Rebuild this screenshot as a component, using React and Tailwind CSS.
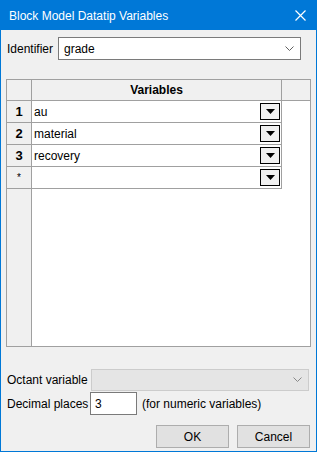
import React from "react";

const rows = [
  { id: "1", value: "au" },
  { id: "2", value: "material" },
  { id: "3", value: "recovery" },
  { id: "*", value: "" },
];

const Chevron = ({ color = "#606060" }) => (
  <svg width="9" height="6" viewBox="0 0 9 6" fill="none">
    <path d="M0.5 0.5 L4.5 4.5 L8.5 0.5" stroke={color} strokeWidth="1" />
  </svg>
);

const DropButton = () => (
  <div className="w-[20px] h-[17px] border border-black bg-[#f0f0f0] flex items-center justify-center">
    <svg width="9" height="5" viewBox="0 0 9 5">
      <path d="M0 0 H9 L4.5 5 Z" fill="#000" />
    </svg>
  </div>
);

const App = () => {
  return (
    <div
      className="w-[317px] h-[452px] bg-[#0078d7] p-px flex flex-col text-[12px] text-black whitespace-nowrap"
      style={{ fontFamily: '"Liberation Sans", Arial, sans-serif' }}
    >
      {/* title bar */}
      <div className="h-[29px] flex items-center justify-between pl-[8px] pr-[10px] text-white">
        <span className="leading-none">Block Model Datatip Variables</span>
        <svg width="11" height="11" viewBox="0 0 11 11">
          <path d="M0.5 0.5 L10.5 10.5 M10.5 0.5 L0.5 10.5" stroke="#fff" strokeWidth="1.2" />
        </svg>
      </div>

      <div className="flex-1 bg-[#f0f0f0] flex flex-col">
        {/* identifier */}
        <div className="flex items-center mt-[7px] ml-[6px] mr-[15px]">
          <span className="w-[51px] leading-none">Identifier</span>
          <div className="flex-1 h-[23px] bg-white border border-[#7a7a7a] flex items-center justify-between pl-[5px] pr-[6px]">
            <span className="leading-none">grade</span>
            <Chevron />
          </div>
        </div>

        {/* grid */}
        <div className="mt-[19px] ml-[5px] mr-[5px] h-[268px] border border-[#a0a0a0] bg-white flex">
          <div className="w-[25px] bg-[#f0f0f0] flex flex-col border-r border-[#a0a0a0]">
            <div className="h-[21px] border-b border-[#a0a0a0]" />
            {rows.map((r) => (
              <div
                key={r.id}
                className={`h-[22px] border-b border-[#a0a0a0] flex items-center justify-center ${
                  r.id === "*" ? "text-[10px]" : "font-bold text-[13px]"
                }`}
              >
                {r.id}
              </div>
            ))}
          </div>
          <div className="flex-1 flex flex-col">
            <div className="h-[21px] flex bg-[#f0f0f0] border-b border-[#a0a0a0]">
              <div className="w-[250px] border-r border-[#a0a0a0] flex items-center justify-center font-bold">
                Variables
              </div>
              <div className="flex-1 mr-px" />
            </div>
            <div className="w-[250px] flex flex-col">
              {rows.map((r) => (
                <div
                  key={r.id}
                  className="h-[22px] border-b border-r border-[#a0a0a0] flex items-center justify-between pl-[2px] pr-px"
                >
                  <span className="leading-none">{r.value}</span>
                  <DropButton />
                </div>
              ))}
            </div>
          </div>
        </div>

        {/* octant */}
        <div className="flex items-center mt-[22px] ml-[6px] mr-[7px]">
          <span className="w-[84px] leading-none">Octant variable</span>
          <div className="flex-1 h-[22px] bg-[#e5e5e5] border border-[#cccccc] flex items-center justify-end pr-[6px]">
            <Chevron color="#888888" />
          </div>
        </div>

        {/* decimal */}
        <div className="flex items-center mt-px ml-[6px]">
          <span className="w-[83px] leading-none">Decimal places</span>
          <div className="w-[47px] h-[23px] bg-white border border-[#7a7a7a] flex items-center pl-[4px]">
            <span className="leading-none">3</span>
          </div>
          <span className="ml-[5px] leading-none">(for numeric variables)</span>
        </div>

        {/* buttons */}
        <div className="flex justify-end gap-[8px] mt-[10px] mr-[6px]">
          <div className="w-[73px] h-[23px] bg-[#e1e1e1] border border-[#adadad] flex items-center justify-center">
            OK
          </div>
          <div className="w-[73px] h-[23px] bg-[#e1e1e1] border border-[#adadad] flex items-center justify-center">
            Cancel
          </div>
        </div>
      </div>
    </div>
  );
};

export default App;
